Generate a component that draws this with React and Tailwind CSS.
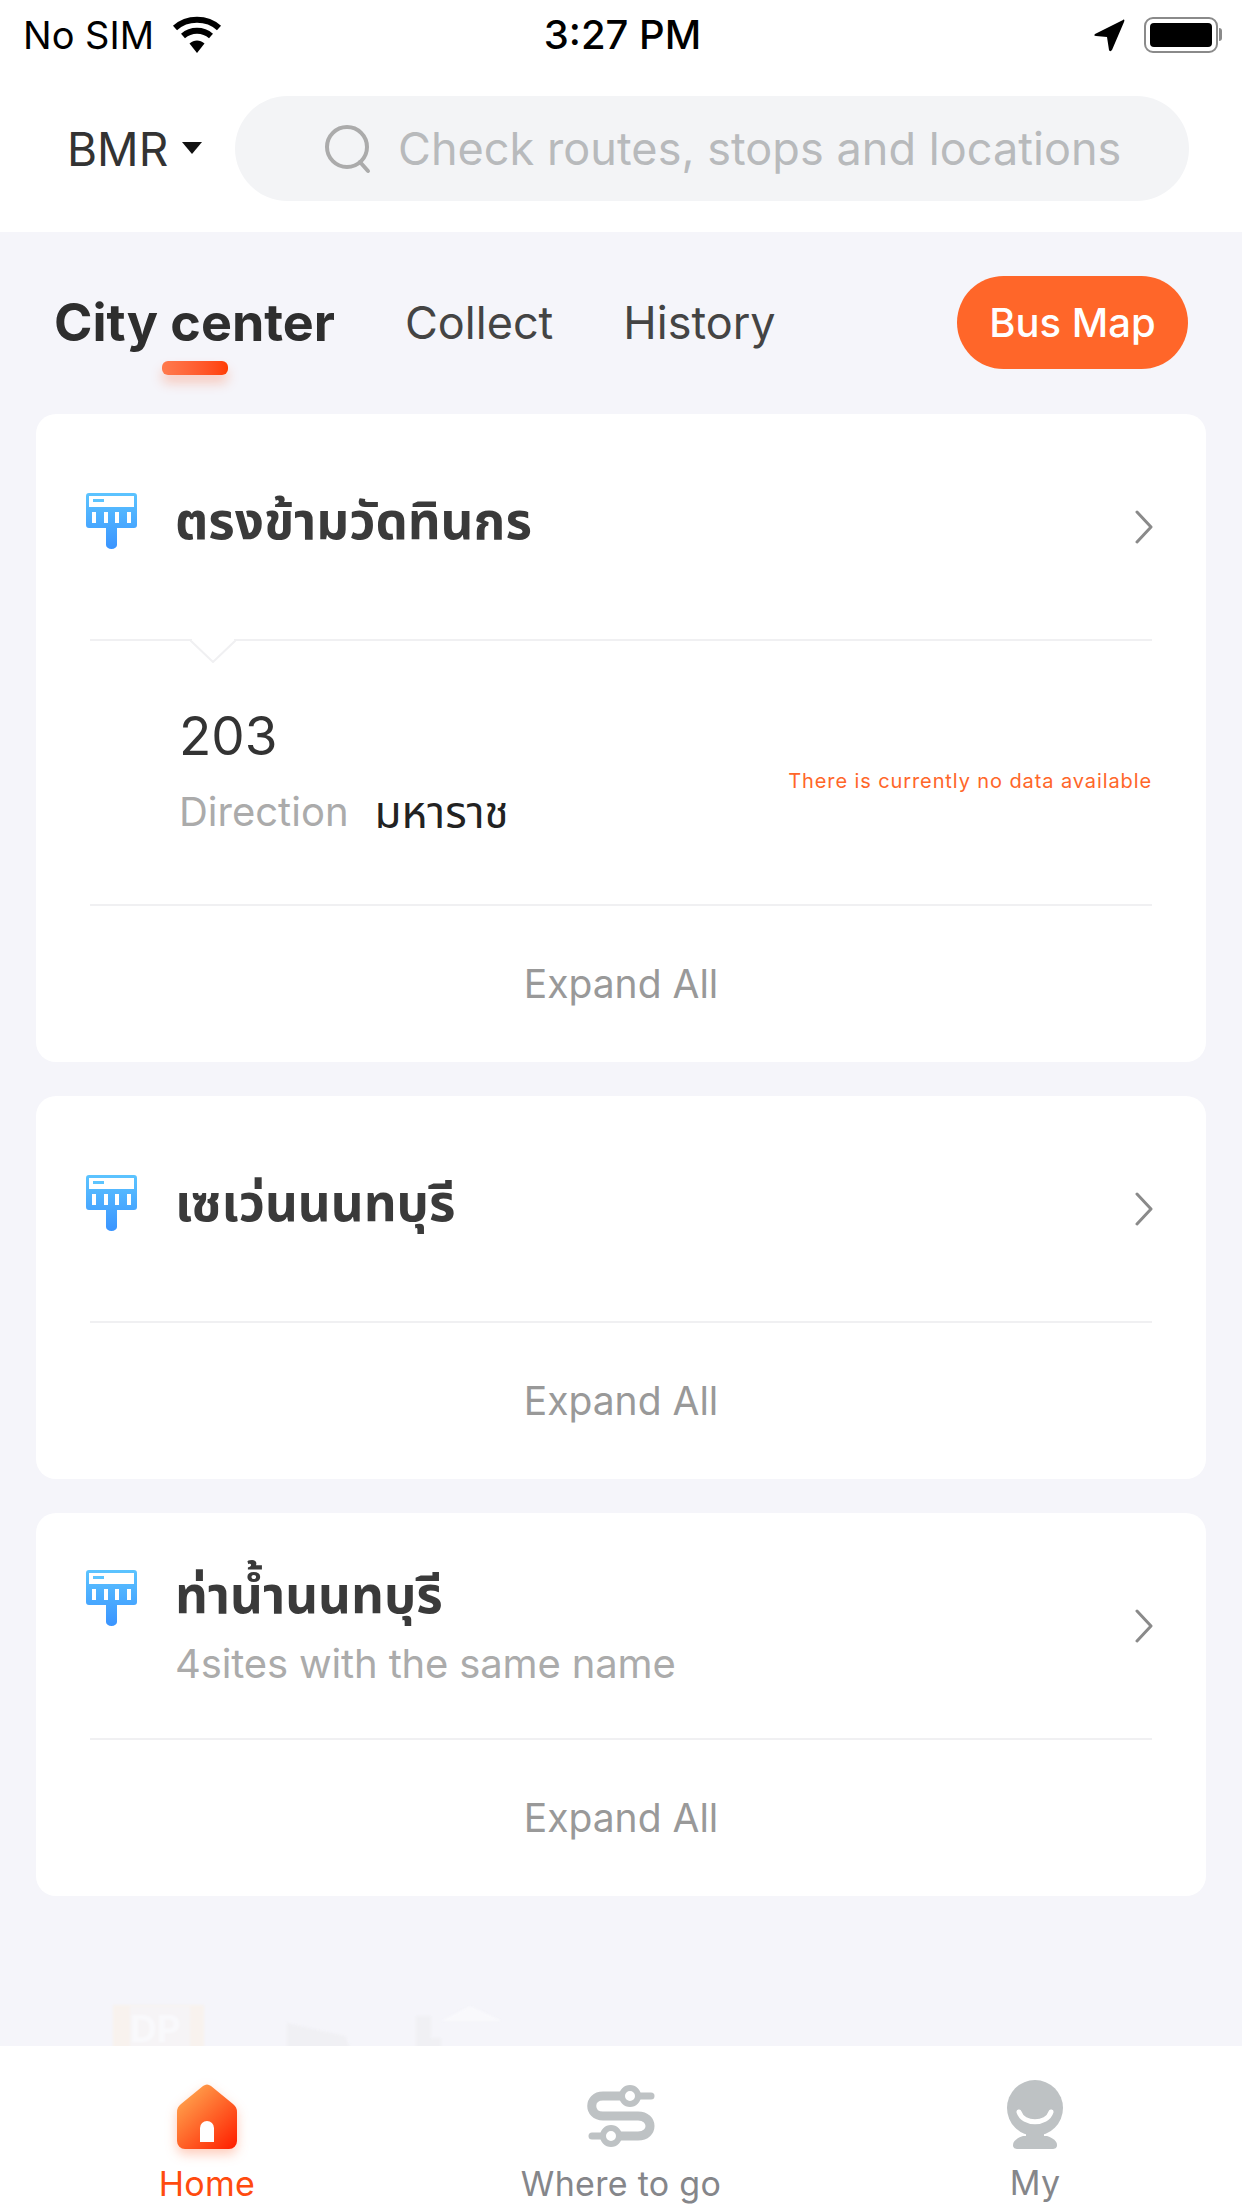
import React from 'react'

const font = { fontFamily: 'Inter, "Noto Sans", "Noto Sans Thai", "Noto Sans CJK SC", sans-serif' }

function Wifi() {
  return (
    <svg width="50" height="38" viewBox="0 0 50 38" fill="none" stroke="black" strokeWidth="6">
      <path d="M3 12 C15 1 35 1 47 12" />
      <path d="M11 20 C19 13 31 13 39 20" />
      <path d="M17.5 27.5 L25 37 L32.5 27.5 C28 23.5 22 23.5 17.5 27.5Z" fill="black" stroke="none" />
    </svg>
  )
}

function StatusBar() {
  return (
    <div className="flex items-center justify-between h-[64px] pt-[5px] pl-[23px] pr-[20px] text-black">
      <div className="flex items-center gap-[18px] w-[300px]">
        <span className="text-[38px] leading-none">No SIM</span>
        <Wifi />
      </div>
      <span className="text-[40px] font-medium leading-none">3:27 PM</span>
      <div className="flex items-center justify-end gap-[19px] w-[300px]">
        <svg width="32" height="34" viewBox="0 0 32 34">
          <path d="M30 2 L2 16 C1 17 1 18 3 18 L14 19 L16 32 C17 34 18 33 19 32 L31 4 C32 2 31 1 30 2Z" fill="black" />
        </svg>
        <div className="flex items-center">
          <div className="w-[74px] h-[36px] rounded-[9px] border-[2px] border-[#8a8a8a] p-[4px]">
            <div className="w-full h-full bg-black rounded-[4px]" />
          </div>
          <div className="w-[3px] h-[13px] bg-[#8a8a8a] rounded-r-full ml-[1px]" />
        </div>
      </div>
    </div>
  )
}

function Header() {
  return (
    <div className="bg-white">
      <StatusBar />
      <div className="flex items-center pl-[67px] pr-[53px] pt-[32px] pb-[31px]">
        <div className="flex items-center w-[168px]">
          <span className="text-[46px] leading-none text-[#333333]">BMR</span>
          <svg className="ml-[14px] mt-[-2px]" width="20" height="12" viewBox="0 0 20 12">
            <path d="M0 0 H20 L10 12 Z" fill="#111" />
          </svg>
        </div>
        <div className="flex-1 h-[105px] rounded-full bg-[#F3F4F6] flex items-center pl-[89px]">
          <svg width="48" height="50" viewBox="0 0 48 50" fill="none" stroke="#ABABAB" strokeWidth="4">
            <circle cx="23" cy="23" r="20" />
            <path d="M36 38 L44 47" strokeLinecap="round" />
          </svg>
          <span className="ml-[26px] text-[45px] leading-none tracking-[0.05px] text-[#B8BABC] whitespace-nowrap">Check routes, stops and locations</span>
        </div>
      </div>
    </div>
  )
}

function Tabs() {
  return (
    <div className="flex items-center pl-[54px] pr-[54px] pt-[44px] pb-[45px]">
      <div className="relative">
        <span className="text-[52px] font-bold leading-none text-[#2E2E2E] whitespace-nowrap">City center</span>
        <div className="absolute left-[108px] top-[64px] w-[66px] h-[14px] rounded-[6px] bg-gradient-to-r from-[#FF7A4D] to-[#FF3D00] shadow-[0_8px_12px_rgba(255,80,20,0.25)]" />
      </div>
      <span className="ml-[70px] text-[45px] leading-none text-[#444444]">Collect</span>
      <span className="ml-[70px] text-[45px] leading-none text-[#444444]">History</span>
      <button className="ml-auto w-[231px] h-[93px] rounded-full bg-[#FF6629] text-white text-[40px] font-medium">Bus Map</button>
    </div>
  )
}

function StopIcon() {
  return (
    <svg width="51" height="56" viewBox="0 0 51 56" className="shrink-0">
      <defs>
        <linearGradient id="stopBlue" x1="0" y1="0" x2="0" y2="1">
          <stop offset="0" stopColor="#5CC4FF" />
          <stop offset="1" stopColor="#3A94FF" />
        </linearGradient>
      </defs>
      <path d="M3 0 H48 a3 3 0 0 1 3 3 V32 a3 3 0 0 1 -3 3 H31 V52 a5.5 4 0 0 1 -11 0 V35 H3 a3 3 0 0 1 -3 -3 V3 a3 3 0 0 1 3 -3Z" fill="url(#stopBlue)" />
      <rect x="3" y="3" width="45" height="11" fill="white" />
      <rect x="7" y="6" width="11" height="3" fill="#5CC4FF" />
      <rect x="6" y="19" width="4" height="11" fill="white" />
      <rect x="18" y="19" width="4" height="11" fill="white" />
      <rect x="29" y="19" width="4" height="11" fill="white" />
      <rect x="41" y="19" width="4" height="11" fill="white" />
    </svg>
  )
}

function Chevron() {
  return (
    <svg className="-mr-[1px]" width="18" height="36" viewBox="0 0 18 36" fill="none" stroke="#8A8A8A" strokeWidth="3" strokeLinecap="round" strokeLinejoin="round">
      <path d="M2 3 L16 18 L2 33" />
    </svg>
  )
}

function Card({ title, subtitle, route }) {
  return (
    <div className="bg-white rounded-[20px] px-[54px]">
      <div className="h-[225px] flex items-center justify-between">
        <div className={subtitle ? 'flex items-start -ml-[4px]' : 'flex items-start -ml-[4px] mb-[12px]'}>
          <div className={subtitle ? 'mt-[8px]' : 'mt-[5px]'}><StopIcon /></div>
          <div className="ml-[38px]">
            <div className="text-[51px] font-bold leading-[66px] text-[#3A3A3A]">{title}</div>
            {subtitle && <div className="mt-[11px] text-[40px] leading-[50px] tracking-[-0.15px] text-[#ABABAB]">{subtitle}</div>}
          </div>
        </div>
        <Chevron />
      </div>
      {route && (
        <div className="relative border-t-2 border-[#F0F0F2] h-[265px] flex items-center justify-between">
          <svg className="absolute left-[100px] -top-[2px]" width="46" height="24" viewBox="0 0 46 24">
            <path d="M0 1 L23 23 L46 1" fill="white" stroke="#F0F0F2" strokeWidth="2" />
            <path d="M2 0 H44 V1 H2Z" fill="white" />
          </svg>
          <div className="pl-[89px] -mt-[2px]">
            <div className="text-[53px] leading-none text-[#333333]">{route}</div>
            <div className="flex items-center mt-[27px]">
              <span className="text-[40px] leading-none text-[#ABABAB]">Direction</span>
              <span className="ml-[26px] text-[44px] leading-none text-[#222222]">มหาราช</span>
            </div>
          </div>
          <div className="text-[20px] tracking-[0.9px] text-[#FF6629] mt-[17px] whitespace-nowrap">There is currently no data available</div>
        </div>
      )}
      <div className="border-t-2 border-[#F0F0F2] h-[158px] flex items-center justify-center text-[39px] text-[#999999]">
        Expand All
      </div>
    </div>
  )
}

// faint poster art showing through behind the tab bar
function Illustration() {
  return (
    <svg className="mt-auto -mb-[12px] block blur-[1px]" width="1242" height="62" viewBox="0 0 1242 62">
      <rect x="113" y="9" width="91" height="53" fill="#F8F2EE" />
      <rect x="130" y="10" width="60" height="52" fill="#F6F4F6" />
      <text x="130" y="46" fontSize="37" fontWeight="700" fill="#F9F9FC" style={font}>DP</text>
      <path d="M287 27 L345 40 L355 62 H287Z" fill="#F0F0F4" />
      <path d="M416 20 H431 V42 H441 V62 H416Z" fill="#F0F0F4" />
      <path d="M441 25 L470 10 L502 25Z" fill="#F9F9FC" />
    </svg>
  )
}

function TabBar() {
  return (
    <div className="relative bg-white h-[162px] grid grid-cols-3">
      <div className="flex flex-col items-center pt-[38px]">
        <svg width="60" height="66" viewBox="0 0 60 66" className="drop-shadow-[0_5px_6px_rgba(255,80,20,0.3)]">
          <defs>
            <linearGradient id="homeOrange" x1="0.15" y1="0.1" x2="0.95" y2="1">
              <stop offset="0" stopColor="#FFA24D" />
              <stop offset="1" stopColor="#FF1F00" />
            </linearGradient>
          </defs>
          <path d="M26 2 Q30 -1 34 2 L56 20 Q60 23 60 28 V57 a8 8 0 0 1 -8 8 H8 a8 8 0 0 1 -8 -8 V28 Q0 23 4 20Z" fill="url(#homeOrange)" />
          <path d="M23 58 V44 a7 7 0 0 1 14 0 V58Z" fill="white" />
        </svg>
        <span className="text-[34px] tracking-[0.3px] leading-none mt-[17px] text-[#FF4B0F]">Home</span>
      </div>
      <div className="flex flex-col items-center pt-[38px]">
        <svg width="68" height="66" viewBox="0 0 68 66" fill="none" stroke="#BEC2C4" strokeLinecap="round">
          <path d="M43 12 H16 C1 12 1 32 16 32 H51 C67 32 67 52 51 52 H24" strokeWidth="9" />
          <path d="M50 12 H64" strokeWidth="7" />
          <path d="M5 52 H18" strokeWidth="7" />
          <circle cx="43" cy="12" r="8" fill="white" strokeWidth="6" />
          <circle cx="24" cy="52" r="8" fill="white" strokeWidth="6" />
        </svg>
        <span className="text-[34px] tracking-[0.3px] leading-none mt-[17px] text-[#85868A]">Where to go</span>
      </div>
      <div className="flex flex-col items-center pt-[34px]">
        <svg width="60" height="70" viewBox="0 0 60 70" fill="#BEC2C4">
          <ellipse cx="30" cy="28" rx="28" ry="28" />
          <rect x="21" y="48" width="18" height="14" />
          <path d="M18 56 H42 C48 58 52 61 52 65 C52 68 50 69 47 69 H13 C10 69 8 68 8 65 C8 61 12 58 18 56Z" />
          <path d="M14 32 C18 45 42 45 46 32" fill="none" stroke="white" strokeWidth="5" strokeLinecap="round" />
        </svg>
        <span className="text-[34px] tracking-[0.3px] leading-none mt-[16px] text-[#85868A]">My</span>
      </div>
    </div>
  )
}

export default function App() {
  return (
    <div className="w-[1242px] h-[2208px] flex flex-col bg-[#F5F5FA] overflow-hidden" style={font}>
      <Header />
      <Tabs />
      <div className="flex flex-col gap-[34px] px-[36px] w-full">
        <Card title="ตรงข้ามวัดทินกร" route="203" />
        <Card title="เซเว่นนนทบุรี" />
        <Card title="ท่าน้ำนนทบุรี" subtitle="4sites with the same name" />
      </div>
      <Illustration />
      <TabBar />
    </div>
  )
}
